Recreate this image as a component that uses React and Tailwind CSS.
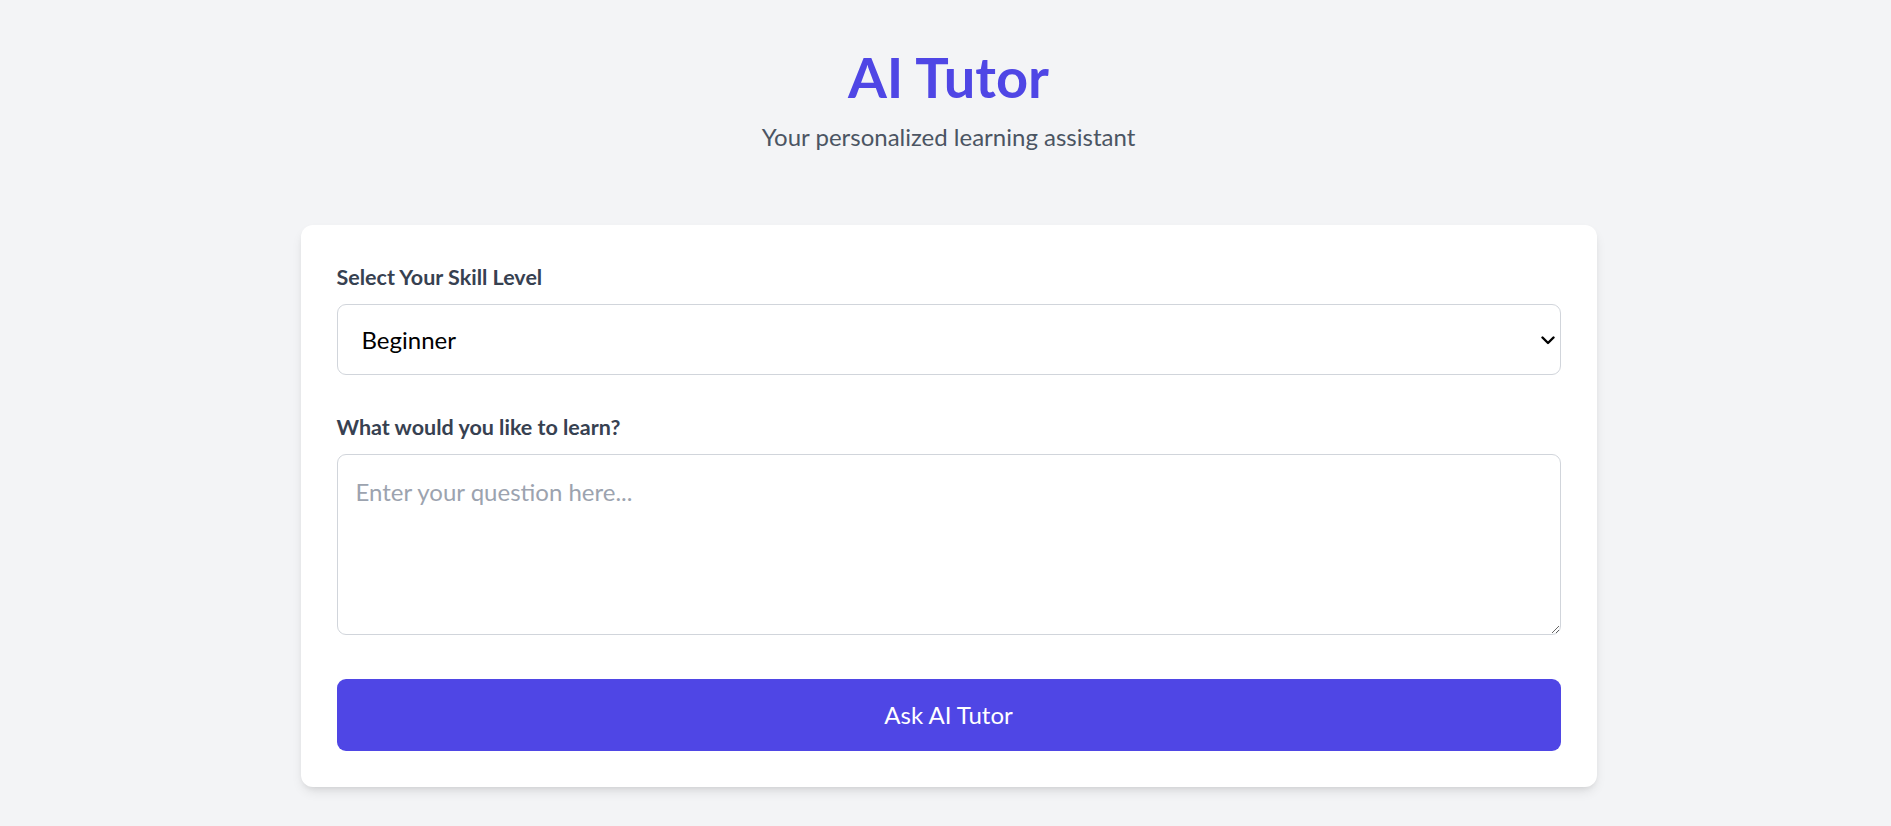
import { useState } from 'react'

export default function App() {
    const [level, setLevel] = useState('beginner')
    const [question, setQuestion] = useState('')

    return (
        <div className="min-h-screen bg-[#f3f4f6] font-['Lato',sans-serif] flex justify-center pl-[6px]">
            <div className="w-[1296px] pt-[47px]">

                {/* Header */}
                <div className="text-center mb-[70px]">
                    <h1 className="text-[56px] leading-[60px] font-bold text-[#4f46e5]">AI Tutor</h1>
                    <p className="mt-[12px] text-[24px] leading-[36px] text-[#4b5563]">
                        Your personalized learning assistant
                    </p>
                </div>

                {/* Card */}
                <div className="bg-white rounded-[12px] shadow-[0_6px_12px_-2px_rgba(0,0,0,0.1),0_3px_6px_-3px_rgba(0,0,0,0.1)] px-[36px] pt-[37px] pb-[36px]">
                    <label className="block text-[21.5px] leading-[30px] font-bold text-[#374151] mb-[12px]">
                        Select Your Skill Level
                    </label>
                    <div className="relative mb-[37px]">
                        <select
                            value={level}
                            onChange={e => setLevel(e.target.value)}
                            className="w-full h-[71px] appearance-none bg-white border-[1.5px] border-[#d1d5db] rounded-[9px] pl-[24px] pr-[48px] text-[24px] text-black outline-none">
                            <option value="beginner">Beginner</option>
                            <option value="intermediate">Intermediate</option>
                            <option value="advanced">Advanced</option>
                        </select>
                        <svg className="absolute right-[6px] top-1/2 -translate-y-1/2 pointer-events-none"
                            width="14" height="10" viewBox="0 0 14 10" fill="none">
                            <path d="M1.5 2.5l5.5 5.5 5.5-5.5" stroke="#000" strokeWidth="2.4" strokeLinecap="round" strokeLinejoin="round" />
                        </svg>
                    </div>

                    <label className="block text-[21.5px] leading-[30px] font-bold text-[#374151] mb-[12px]">
                        What would you like to learn?
                    </label>
                    <textarea
                        rows={4}
                        value={question}
                        onChange={e => setQuestion(e.target.value)}
                        placeholder="Enter your question here..."
                        className="block w-full h-[181px] border-[1.5px] border-[#d1d5db] rounded-[9px] px-[18px] pt-[19px] pb-[15px] text-[24px] leading-[36px] text-black placeholder-[#9ca3af] outline-none"
                    />

                    <button className="mt-[44px] w-full h-[72px] rounded-[9px] bg-[#4f46e5] text-white text-[24px]">
                        Ask AI Tutor
                    </button>
                </div>
            </div>
        </div>
    )
}
